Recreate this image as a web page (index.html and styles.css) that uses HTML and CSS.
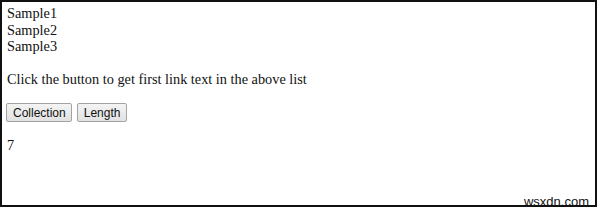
FILE: index.html
```html
<!DOCTYPE html>
<html>
<head>
<meta charset="utf-8">
<link rel="stylesheet" href="styles.css">
</head>
<body>
<div class="frame">
  <div class="list">
    <div class="item">Sample1</div>
    <div class="item">Sample2</div>
    <div class="item">Sample3</div>
  </div>
  <p class="msg">Click the button to get first link text in the above list</p>
  <div class="buttons">
    <button class="btn">Collection</button>
    <button class="btn">Length</button>
  </div>
  <p class="result">7</p>
  <span class="mark">wsxdn.com</span>
</div>
</body>
</html>
```
FILE: styles.css
```css
html, body {
  margin: 0;
  padding: 0;
  background: #fff;
}
.frame {
  position: relative;
  box-sizing: border-box;
  width: 597px;
  height: 207px;
  border: 2px solid #111;
  padding: 3px 5px;
  font-family: "Liberation Serif", "Times New Roman", serif;
  font-size: 14.3px;
  color: #111;
}
.item {
  line-height: 16.5px;
}
.msg {
  margin: 16px 0 0 0;
  line-height: 16.5px;
}
.buttons {
  display: flex;
  gap: 5px;
  margin: 16px 0 0 -1px;
}
.btn {
  font-family: "Liberation Sans", Arial, sans-serif;
  font-size: 12px;
  height: 19px;
  padding: 0 6px;
  border: 1px solid #a3a3a3;
  border-radius: 2px;
  background: linear-gradient(#f4f4f4, #e2e2e2);
  color: #111;
}
.btn:first-child {
  padding: 0 5px 0 6px;
}
.result {
  margin: 15px 0 0 0;
  line-height: 16.5px;
}
.mark {
  position: absolute;
  right: 6px;
  bottom: -3px;
  line-height: 13px;
  font-family: "Liberation Sans", Arial, sans-serif;
  font-size: 13px;
  color: #111;
}
```
